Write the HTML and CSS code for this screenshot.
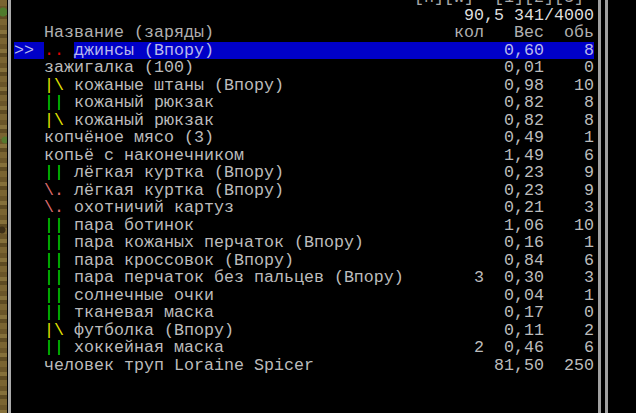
FILE: index.html
```html
<!DOCTYPE html>
<html lang="ru">
<head>
<meta charset="utf-8">
<title>Инвентарь</title>
<link rel="stylesheet" href="styles.css">
</head>
<body>
<div class="screen">
  <div class="terrain"></div>
  <div class="panel">
    <div class="rows">
      <div class="line top">[h][w]  [1][2][3]</div>
      <div class="line total">90,5 341/4000</div>
      <div class="row head">
        <span class="cur"></span><span class="name"><span class="nm">Название (заряды)</span></span><span class="qty">кол</span><span class="wt">Вес</span><span class="vol">обь</span>
      </div>
      <div class="row sel">
        <span class="cur">&gt;&gt;</span><span class="name"><span class="mark red">..</span><span class="nm">джинсы (Впору)</span></span><span class="qty"></span><span class="wt">0,60</span><span class="vol">8</span>
      </div>
      <div class="row">
        <span class="cur"></span><span class="name"><span class="nm">зажигалка (100)</span></span><span class="qty"></span><span class="wt">0,01</span><span class="vol">0</span>
      </div>
      <div class="row">
        <span class="cur"></span><span class="name"><span class="mark yellow">|\</span><span class="nm">кожаные штаны (Впору)</span></span><span class="qty"></span><span class="wt">0,98</span><span class="vol">10</span>
      </div>
      <div class="row">
        <span class="cur"></span><span class="name"><span class="mark green">||</span><span class="nm">кожаный рюкзак</span></span><span class="qty"></span><span class="wt">0,82</span><span class="vol">8</span>
      </div>
      <div class="row">
        <span class="cur"></span><span class="name"><span class="mark yellow">|\</span><span class="nm">кожаный рюкзак</span></span><span class="qty"></span><span class="wt">0,82</span><span class="vol">8</span>
      </div>
      <div class="row">
        <span class="cur"></span><span class="name"><span class="nm">копчёное мясо (3)</span></span><span class="qty"></span><span class="wt">0,49</span><span class="vol">1</span>
      </div>
      <div class="row">
        <span class="cur"></span><span class="name"><span class="nm">копьё с наконечником</span></span><span class="qty"></span><span class="wt">1,49</span><span class="vol">6</span>
      </div>
      <div class="row">
        <span class="cur"></span><span class="name"><span class="mark green">||</span><span class="nm">лёгкая куртка (Впору)</span></span><span class="qty"></span><span class="wt">0,23</span><span class="vol">9</span>
      </div>
      <div class="row">
        <span class="cur"></span><span class="name"><span class="mark pink">\.</span><span class="nm">лёгкая куртка (Впору)</span></span><span class="qty"></span><span class="wt">0,23</span><span class="vol">9</span>
      </div>
      <div class="row">
        <span class="cur"></span><span class="name"><span class="mark pink">\.</span><span class="nm">охотничий картуз</span></span><span class="qty"></span><span class="wt">0,21</span><span class="vol">3</span>
      </div>
      <div class="row">
        <span class="cur"></span><span class="name"><span class="mark green">||</span><span class="nm">пара ботинок</span></span><span class="qty"></span><span class="wt">1,06</span><span class="vol">10</span>
      </div>
      <div class="row">
        <span class="cur"></span><span class="name"><span class="mark green">||</span><span class="nm">пара кожаных перчаток (Впору)</span></span><span class="qty"></span><span class="wt">0,16</span><span class="vol">1</span>
      </div>
      <div class="row">
        <span class="cur"></span><span class="name"><span class="mark green">||</span><span class="nm">пара кроссовок (Впору)</span></span><span class="qty"></span><span class="wt">0,84</span><span class="vol">6</span>
      </div>
      <div class="row">
        <span class="cur"></span><span class="name"><span class="mark green">||</span><span class="nm">пара перчаток без пальцев (Впору)</span></span><span class="qty">3</span><span class="wt">0,30</span><span class="vol">3</span>
      </div>
      <div class="row">
        <span class="cur"></span><span class="name"><span class="mark green">||</span><span class="nm">солнечные очки</span></span><span class="qty"></span><span class="wt">0,04</span><span class="vol">1</span>
      </div>
      <div class="row">
        <span class="cur"></span><span class="name"><span class="mark green">||</span><span class="nm">тканевая маска</span></span><span class="qty"></span><span class="wt">0,17</span><span class="vol">0</span>
      </div>
      <div class="row">
        <span class="cur"></span><span class="name"><span class="mark yellow">|\</span><span class="nm">футболка (Впору)</span></span><span class="qty"></span><span class="wt">0,11</span><span class="vol">2</span>
      </div>
      <div class="row">
        <span class="cur"></span><span class="name"><span class="mark green">||</span><span class="nm">хоккейная маска</span></span><span class="qty">2</span><span class="wt">0,46</span><span class="vol">6</span>
      </div>
      <div class="row">
        <span class="cur"></span><span class="name"><span class="nm">человек труп Loraine Spicer</span></span><span class="qty"></span><span class="wt">81,50</span><span class="vol">250</span>
      </div>
    </div>
  </div>
  <div class="frame-right"></div>
</div>
</body>
</html>
```

FILE: styles.css
```css
html, body {
  margin: 0;
  padding: 0;
  background: #000;
}

.screen {
  width: 636px;
  height: 413px;
  overflow: hidden;
  display: flex;
  background: #000;
  font-family: "Liberation Mono", "DejaVu Sans Mono", monospace;
  font-size: 16.667px;
  color: #bcbcbc;
}

.terrain {
  flex: none;
  width: 7px;
  background:
    radial-gradient(circle at 3px 12px, #4f7a2c 0 4px, transparent 5px),
    radial-gradient(circle at 5px 140px, #55782e 0 3px, transparent 4px),
    radial-gradient(circle at 2px 230px, #3d2f16 0 3px, transparent 4px),
    repeating-linear-gradient(180deg, #7a6431 0 6px, #6a5528 6px 11px, #85703a 11px 15px, #5e4b22 15px 19px);
}

.panel {
  flex: none;
  width: 580px;
  margin-left: 1px;
  border-left: 3px solid #aaaaaa;
  padding-left: 3px;
  padding-right: 4px;
  overflow: hidden;
}

.frame-right {
  flex: none;
  width: 4px;
  border-left: 3px solid #a0a0a0;
  border-right: 3px solid #a0a0a0;
}

.rows {
  margin-top: -10.75px;
}

.line {
  height: 17.5px;
  line-height: 17.5px;
  text-align: right;
  white-space: pre;
}

.line.top {
  padding-right: 10px;
  color: #a8a8a8;
}

.line.total {
  color: #dedede;
}

.row {
  display: grid;
  grid-template-columns: 30px 410px 30px 60px 50px;
  height: 17.5px;
  line-height: 17.5px;
}

.cur,
.mark,
.nm,
.qty,
.wt,
.vol {
  white-space: pre;
}

.name {
  display: flex;
  overflow: hidden;
}

.mark {
  flex: none;
  width: 30px;
}

.nm {
  flex: 1;
}

.qty, .wt, .vol {
  text-align: right;
}

.head {
  color: #b0b0b0;
}

.sel .cur,
.sel .nm,
.sel .qty,
.sel .wt,
.sel .vol {
  background: #0000c8;
  color: #b8b8ec;
}

.red { color: #e00000; }
.yellow { color: #e4e400; }
.green { color: #00dc00; }
.pink { color: #dc6a6a; }
```
